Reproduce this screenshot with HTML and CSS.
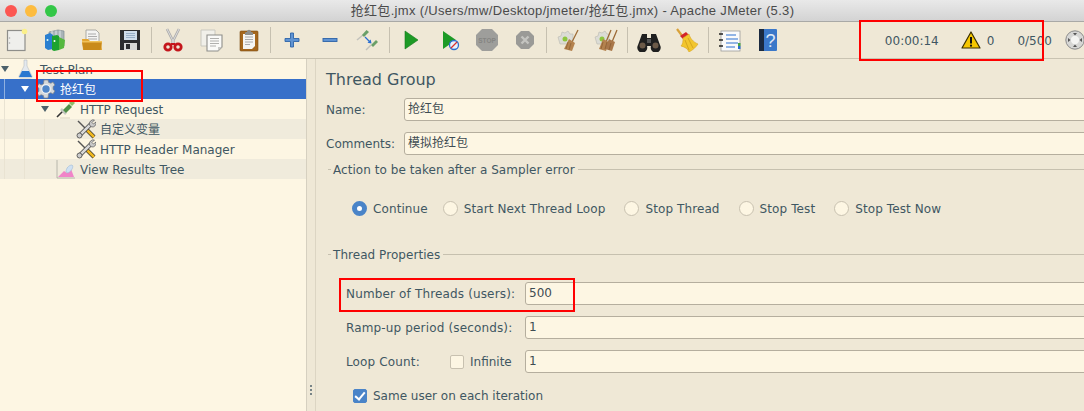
FILE: index.html
```html
<!DOCTYPE html>
<html lang="zh">
<head>
<meta charset="utf-8">
<title>抢红包.jmx - Apache JMeter (5.3)</title>
<link rel="stylesheet" href="styles.css">
</head>
<body>
<div class="window">
  <header class="titlebar">
    <div class="lights"><span class="light red"></span><span class="light amber"></span><span class="light green"></span></div>
    <div class="title">抢红包.jmx (/Users/mw/Desktop/jmeter/抢红包.jmx) - Apache JMeter (5.3)</div>
  </header>

  <div class="toolbar">
    <div class="group">
      <svg class="tool" viewBox="0 0 24 24"><rect x="3.5" y="2.5" width="17.500" height="20" fill="#efefec" stroke="#8e8e8a" stroke-width="1.200"/><circle cx="5.500" cy="10" r=".8" fill="#aaa"/><circle cx="5.500" cy="15" r=".8" fill="#aaa"/><circle cx="20.500" cy="3.500" r="2.800" fill="#fbf08a"/></svg>
      <svg class="tool" viewBox="0 0 24 24"><path d="M7 4l9-2 6 1v15l-14 2z" fill="#a9b4b8" stroke="#7d8a90" stroke-width=".7"/><path d="M10 3v14M14 2.500v14M18 2.500v14" stroke="#dfe5e8"/><path d="M3 7l5-2 3 2v14l-5 1-3-2z" fill="#2a7fd0"/><path d="M10 8l5-1 2 1v14l-5 1-2-1z" fill="#1da32f"/><path d="M17 9l6 3-1 8-5 2z" fill="#55b83e"/><circle cx="12.500" cy="13" r="1" fill="#fff"/><circle cx="5.500" cy="12" r="1" fill="#dff"/></svg>
      <svg class="tool" viewBox="0 0 24 24"><path d="M6 2h10l3 3v10H6z" fill="#f4f4f2" stroke="#9b9b96" stroke-width=".8"/><path d="M8 6h8M8 8.500h9M8 11h9" stroke="#9a9a9a" stroke-width=".8"/><path d="M2 11h6l2 2h11l1 9H3z" fill="#e4a52f"/><path d="M2 14h20l-1.500 8H3.500z" fill="#c98a1a"/><path d="M2 13h20v1.500H2z" fill="#f0c158"/></svg>
      <svg class="tool" viewBox="0 0 24 24"><path d="M2 2h20v20H2z" fill="#2c2c30"/><rect x="6" y="3" width="13" height="9" fill="#cfdcec"/><path d="M8 5.500h9M8 7.500h9M8 9.500h9" stroke="#8aa2bf" stroke-width=".8"/><rect x="6" y="15" width="13" height="7" fill="#d8d8d8"/><rect x="8" y="16" width="4" height="5" fill="#2c2c30"/></svg>
    </div>
    <i class="sep"></i>
    <div class="group">
      <svg class="tool" viewBox="0 0 24 24"><path d="M6 1l7 14M18 1l-7 14" stroke="#a9a9a9" stroke-width="2.600" fill="none"/><path d="M6 1l7 14M18 1l-7 14" stroke="#e4e4e4" stroke-width=".9" fill="none"/><circle cx="7" cy="19" r="3.200" fill="none" stroke="#c4161c" stroke-width="2.800"/><circle cx="17" cy="19" r="3.200" fill="none" stroke="#c4161c" stroke-width="2.800"/><path d="M10 16h4" stroke="#c4161c" stroke-width="2"/></svg>
      <svg class="tool" viewBox="0 0 24 24"><path d="M2 2h14v16H2z" fill="#f1f0ea" stroke="#c9c8c0"/><path d="M8 7h15v12l-4 4H8z" fill="#fafaf8" stroke="#8e8e8a" stroke-width="1.100"/><path d="M11 10.500h9M11 13h9M11 15.500h9M11 18h6" stroke="#a7a7a5" stroke-width=".9"/><path d="M19 23v-4h4z" fill="#c9c9c6"/></svg>
      <svg class="tool" viewBox="0 0 24 24"><rect x="3" y="3" width="18" height="20" rx="1" fill="#a5671d" stroke="#7b4a10" stroke-width=".6"/><path d="M6 6h12v12l-3 3H6z" fill="#f5f5f3"/><path d="M8 9h8M8 11.500h8M8 14h8M8 16.500h5" stroke="#a3a3a3" stroke-width=".9"/><path d="M8 5c0-1 1-1 2-1 0-3 4-3 4 0 1 0 2 0 2 1v2H8z" fill="#8d8d8a"/></svg>
    </div>
    <i class="sep"></i>
    <div class="group">
      <svg class="tool" viewBox="0 0 24 24"><path d="M10.500 5h3v5.500H19v3h-5.500V19h-3v-5.500H5v-3h5.500z" fill="#5f93d3" stroke="#2e64a8" stroke-width=".9"/></svg>
      <svg class="tool" viewBox="0 0 24 24"><rect x="5" y="10.500" width="14" height="3" fill="#5f93d3" stroke="#2e64a8" stroke-width=".9"/></svg>
      <svg class="tool" viewBox="0 0 24 24"><path d="M1 12l6-5" stroke="#c2c2bc" stroke-width="1.500"/><path d="M6 7l4.500-5 2.500 2-5 5z" fill="#6a9f68"/><path d="M9 9l5 5" stroke="#2a6fd0" stroke-width="1.200"/><path d="M15.500 15.500l-4-.8 3.200-3.200z" fill="#2a6fd0"/><path d="M10 22l5-5" stroke="#c2c2bc" stroke-width="1.500"/><path d="M15 17l5-5 2 2-5 5z" fill="#6a9f68"/></svg>
    </div>
    <i class="sep"></i>
    <div class="group">
      <svg class="tool" viewBox="0 0 24 24"><path d="M6 3l13 9-13 9z" fill="#1d9a26" stroke="#157a1c" stroke-width=".6"/></svg>
      <svg class="tool" viewBox="0 0 24 24"><path d="M6 3l13 9-13 9z" fill="#1d9a26"/><circle cx="17" cy="17" r="4.500" fill="#e9f1fb" stroke="#2a6fd0" stroke-width="1.300"/><path d="M14 20l6-6" stroke="#d9322e" stroke-width="1.200"/></svg>
      <svg class="tool" viewBox="0 0 24 24"><path d="M7 1h10l6 6v10l-6 6H7l-6-6V7z" fill="#9e9e9b"/><text class="stop" x="12" y="14.500">STOP</text></svg>
      <svg class="tool" viewBox="0 0 24 24"><path d="M8 3h8l5 5v8l-5 5H8l-5-5V8z" fill="#9a9a97"/><path d="M8.500 8.500l7 7M15.500 8.500l-7 7" stroke="#c4c4c0" stroke-width="2.400"/></svg>
    </div>
    <i class="sep"></i>
    <div class="group">
      <svg class="tool" viewBox="0 0 24 24"><path d="M2 9l3-1 1-4 3 1 3-2 2 3 3 0v10H4z" fill="#dcdcd6" stroke="#b8b8b0" stroke-width=".6"/><circle cx="9" cy="11" r="2.500" fill="#8ec63f"/><path d="M22 2l-6 12" stroke="#9c6a36" stroke-width="1.300"/><path d="M13 11l6 4-3 8-8-2z" fill="#b4824e"/><path d="M12 14l-2 7M15 15l-2 7" stroke="#8a5f33" stroke-width=".7"/></svg>
      <svg class="tool" viewBox="0 0 24 24"><path d="M1 9l3-1 1-4 3 1 3-2 2 3 2 0v10H3z" fill="#dcdcd6" stroke="#b8b8b0" stroke-width=".6"/><circle cx="8" cy="11" r="2.500" fill="#8ec63f"/><path d="M17 2l-5 12M23 2l-5 12" stroke="#9c6a36" stroke-width="1.300"/><path d="M9 11l6 3-3 9-7-2z" fill="#b4824e"/><path d="M15 11l6 3-3 9-7-2z" fill="#a9774a"/><path d="M9 14l-2 7M13 14l-2 7M17 15l-2 7" stroke="#85592f" stroke-width=".7"/></svg>
    </div>
    <i class="sep"></i>
    <div class="group">
      <svg class="tool" viewBox="0 0 24 24"><path d="M5 6h5v4h4V6h5l4 11a5 5 0 1 1-9 1h-4a5 5 0 1 1-9-1z" fill="#1f1f1f"/><circle cx="5.500" cy="17.500" r="3" fill="#6c5a48"/><circle cx="18.500" cy="17.500" r="3" fill="#6c5a48"/><rect x="10" y="11" width="4" height="4" fill="#555"/></svg>
      <svg class="tool" viewBox="0 0 24 24"><path d="M2 1l6 8" stroke="#d9a23a" stroke-width="2.200"/><path d="M5 8l6-4 3 3-6 4z" fill="#d3232a"/><path d="M8 10l6-4c1 4 4 8 9 10-2 3-5 6-9 8-1-3-4-5-8-6 2-2 2-5 2-8z" fill="#f2c62d" stroke="#d9a521" stroke-width=".6"/><path d="M10 12l4 10M13 10l5 10" stroke="#c9961a" stroke-width=".7"/></svg>
    </div>
    <i class="sep"></i>
    <div class="group">
      <svg class="tool" viewBox="0 0 24 24"><rect x="3" y="3" width="19" height="20" fill="#fafafa" stroke="#9c9c9c" stroke-width=".8"/><path d="M1 6h4M1 12h4M1 18h4" stroke="#222" stroke-width="1.400"/><path d="M8 7h10M8 11h12M8 15h12M8 19h9" stroke="#2a6fd0" stroke-width="1.200"/><rect x="20" y="15" width="2.500" height="3" fill="#47a447"/><rect x="20" y="18" width="2.500" height="3" fill="#2a6fd0"/></svg>
      <svg class="tool" viewBox="0 0 24 24"><rect x="3" y="1" width="18" height="22" rx="1" fill="#3b78c9"/><rect x="3" y="1" width="5" height="22" fill="#1b2a3f"/><text class="qmark" x="14.500" y="19">?</text></svg>
    </div>
    <div class="status">
      <span class="timer">00:00:14</span>
      <svg class="warn" viewBox="0 0 20 18"><path d="M10 1l9 16H1z" fill="#f6c700" stroke="#3b3000" stroke-width="1.200" stroke-linejoin="round"/><path d="M10 6v6.500" stroke="#111" stroke-width="2"/><circle cx="10" cy="14.700" r="1.100" fill="#111"/></svg>
      <span class="errs">0</span>
      <span class="threads">0/500</span>
      <svg class="remote" viewBox="0 0 20 20"><circle cx="10" cy="10" r="9.200" fill="#d6d6d4" stroke="#8b8b8b"/><circle cx="10" cy="10" r="4.200" fill="#f4f4f2"/><path d="M8 3h4l-2 2.500zM8 17h4l-2-2.500zM3 8v4l2.500-2zM17 8v4l-2.500-2z" fill="#555"/></svg>
    </div>
  </div>

  <div class="main">
    <nav class="tree">
      <div class="row d0">
        <svg class="arrow" viewBox="0 0 8 6"><path d="M0 0h8L4 6z"/></svg>
        <svg class="node" viewBox="0 0 20 20"><path d="M8 1h3v6l5 10c.5 1.500-.5 2-2 2H5c-1.500 0-2.500-.5-2-2L8 7z" fill="#e4e9ee" stroke="#aab2ba" stroke-width=".5"/><path d="M6 12h7l3 6H3z" fill="#2a78d0"/></svg>
        <span>Test Plan</span>
      </div>
      <div class="row d1 selected guide-a">
        <svg class="arrow" viewBox="0 0 8 6"><path d="M0 0h8L4 6z"/></svg>
        <svg class="node" viewBox="0 0 20 20"><path d="M8 1h4l.6 2.400 2.300.9 2-1.300 2 3-1.800 1.600v2.800l1.800 1.600-2 3-2-1.300-2.300.9L12 19H8l-.6-2.400-2.300-.9-2 1.300-2-3 1.800-1.600V9.200L1.100 7.600l2-3 2 1.300 2.300-.9z" fill="#d5d8da" stroke="#7c8388" stroke-width=".7"/><circle cx="10" cy="10" r="4.300" fill="#4f86c9" stroke="#f0f2f4" stroke-width="1.200"/></svg>
        <span>抢红包</span>
      </div>
      <div class="row d2 guide-b">
        <svg class="arrow" viewBox="0 0 8 6"><path d="M0 0h8L4 6z"/></svg>
        <svg class="node" viewBox="0 0 20 20"><path d="M1 18l6-6" stroke="#333" stroke-width="1.600"/><path d="M5 10l5 5" stroke="#c4c6c0" stroke-width="2.500"/><path d="M7 11l6-6 3 3-6 6z" fill="#4f8f46"/><path d="M13 4l3-3 3 3-3 3z" fill="#8fbd6b"/><path d="M4 19h10" stroke="#d8d2c0"/></svg>
        <span>HTTP Request</span>
      </div>
      <div class="row d3 stripe guide-c">
        <svg class="node" viewBox="0 0 20 20"><path d="M2 2l8 8" stroke="#555" stroke-width="1.500"/><path d="M9 9l9 9" stroke="#333" stroke-width="4"/><path d="M9 9l9 9" stroke="#f0b820" stroke-width="2.600"/><path d="M4 16L15 5" stroke="#444" stroke-width="4"/><path d="M4 16L15 5" stroke="#d8d8d8" stroke-width="2.500"/><path d="M18.500 1a4 4 0 0 0-5 5l2 2a4 4 0 0 0 4.500-5l-2.500 2-1.500-1.500z" fill="#c8c8c8" stroke="#444" stroke-width=".6"/><circle cx="3.500" cy="16.500" r="2.500" fill="#ccc" stroke="#444" stroke-width=".8"/></svg>
        <span>自定义变量</span>
      </div>
      <div class="row d3 guide-c">
        <svg class="node" viewBox="0 0 20 20"><path d="M2 2l8 8" stroke="#555" stroke-width="1.500"/><path d="M9 9l9 9" stroke="#333" stroke-width="4"/><path d="M9 9l9 9" stroke="#f0b820" stroke-width="2.600"/><path d="M4 16L15 5" stroke="#444" stroke-width="4"/><path d="M4 16L15 5" stroke="#d8d8d8" stroke-width="2.500"/><path d="M18.500 1a4 4 0 0 0-5 5l2 2a4 4 0 0 0 4.500-5l-2.500 2-1.500-1.500z" fill="#c8c8c8" stroke="#444" stroke-width=".6"/><circle cx="3.500" cy="16.500" r="2.500" fill="#ccc" stroke="#444" stroke-width=".8"/></svg>
        <span>HTTP Header Manager</span>
      </div>
      <div class="row d2 leaf stripe guide-b">
        <svg class="node" viewBox="0 0 20 20"><path d="M1 1v18h18" fill="none" stroke="#a8a8a0" stroke-width=".8"/><path d="M2 18l6-6 3 2 4-4 3 8z" fill="#f084c8"/><path d="M10 13c0-4 3-7 6-7 2 1 0 6-4 8z" fill="#cfe0f2" stroke="#8fb0d0" stroke-width=".5"/></svg>
        <span>View Results Tree</span>
      </div>
    </nav>

    <div class="divider"><i></i><i></i><i></i></div>

    <section class="content">
      <h1>Thread Group</h1>
      <div class="line"><label class="lab-top">Name:</label><div class="field">抢红包</div></div>
      <div class="line"><label class="lab-top">Comments:</label><div class="field">模拟抢红包</div></div>

      <div class="legend first"><span>Action to be taken after a Sampler error</span></div>
      <div class="radios">
        <span class="radio on r-cont">Continue</span>
        <span class="radio r-gap">Start Next Thread Loop</span>
        <span class="radio r-gap">Stop Thread</span>
        <span class="radio r-gap">Stop Test</span>
        <span class="radio">Stop Test Now</span>
      </div>

      <div class="legend second"><span>Thread Properties</span></div>
      <div class="props">
        <div class="line"><label class="lab-prop">Number of Threads (users):</label><div class="field">500</div></div>
        <div class="line"><label class="lab-prop">Ramp-up period (seconds):</label><div class="field">1</div></div>
        <div class="line">
          <label class="lab-loop">Loop Count:</label>
          <span class="check">Infinite</span>
          <div class="field">1</div>
        </div>
        <div class="same"><span class="check on">Same user on each iteration</span></div>
      </div>
    </section>
  </div>

  <div class="mark mark-tree"></div>
  <div class="mark mark-status"></div>
  <div class="mark mark-threads"></div>
</div>
</body>
</html>
```
FILE: styles.css
```css
*, *::before, *::after { box-sizing: border-box; }
html, body { margin: 0; height: 100%; overflow: hidden; }
body {
  font: 12px/16px "DejaVu Sans", "Noto Sans CJK SC", sans-serif;
  color: #3f5762;
  background: #efe8d6;
}
.window { position: relative; width: 1084px; height: 411px; overflow: hidden; display: flex; flex-direction: column; }

.titlebar {
  height: 22px; flex: none; display: flex; align-items: center; position: relative;
  background: linear-gradient(#e9e9e9, #d3d3d3);
  border-bottom: 1px solid #a9a9a6;
}
.lights { display: flex; gap: 8px; padding-left: 5px; }
.light { width: 12px; height: 12px; border-radius: 50%; }
.red { background: #fc5753; }
.amber { background: #fdbc40; }
.green { background: #33c748; }
.title {
  flex: 1; text-align: center; margin-left: 4px; letter-spacing: .33px;
  font: 13px/21px "Liberation Sans", "Noto Sans CJK SC", sans-serif; color: #4a4a4a;
}

.toolbar {
  height: 37px; flex: none; display: flex; align-items: center; padding-left: 4px;
  background: #efe8d6; border-bottom: 1px solid #c9c3b2;
}
.group { display: flex; gap: 14px; }
.tool { width: 24px; height: 24px; display: block; }
.sep { width: 1px; height: 26px; margin: 0 9px; background: #c6c0b0; }
.stop { font: bold 6.500px "Liberation Sans", sans-serif; fill: #858582; text-anchor: middle; }
.qmark { font: 18px "Liberation Sans", sans-serif; fill: #dfe9f6; text-anchor: middle; }
.status { margin-left: auto; display: flex; align-items: center; font-size: 12px; }
.status span { padding-top: 2px; }
.timer { margin-right: 22px; }
.warn { width: 20px; height: 18px; margin-right: 6px; }
.errs { margin-right: 23px; }
.threads { margin-right: 13px; }
.remote { width: 20px; height: 20px; margin-right: -1px; display: block; }

.main { flex: 1; display: flex; min-height: 0; }
.tree { width: 307px; flex: none; background: #fdf6e3; border-right: 1px solid #d6d0c0; }
.row { height: 20px; display: flex; align-items: center; white-space: nowrap; }
.row span { padding-top: 2px; }
.row.d1 { padding-left: 20px; }
.row.d2 { padding-left: 40px; }
.row.d3 { padding-left: 76px; }
.row.leaf { padding-left: 56px; }
.arrow { width: 8px; height: 6px; margin: 0 7px 0 1px; fill: #4d616b; flex: none; }
.node { width: 20px; height: 20px; margin-right: 4px; flex: none; }
.selected { background-color: #3770c9; color: #fff; }
.selected .arrow { fill: #fff; }
.stripe { background-color: #f0ebdc; }
.guide-a { background-image: linear-gradient(#8fb0e0, #8fb0e0); background-size: 1px 100%; background-position: 4px 0; background-repeat: no-repeat; }
.guide-b { background-image: linear-gradient(#e9e3d2, #e9e3d2), linear-gradient(#e9e3d2, #e9e3d2); background-size: 1px 100%; background-position: 4px 0, 24px 0; background-repeat: no-repeat; }
.guide-c { background-image: linear-gradient(#e9e3d2, #e9e3d2), linear-gradient(#e9e3d2, #e9e3d2), linear-gradient(#e9e3d2, #e9e3d2); background-size: 1px 100%; background-position: 4px 0, 24px 0, 44px 0; background-repeat: no-repeat; }

.divider { width: 9px; flex: none; display: flex; flex-direction: column; justify-content: flex-end; align-items: center; gap: 2px; padding-bottom: 16px; border-right: 1px solid #dcd5c3; }
.divider i { width: 2px; height: 2px; background: #51636c; border-radius: 50%; }

.content { flex: 1; min-width: 0; padding: 0 0 0 10px; overflow: hidden; }
.content h1 { margin: 0; padding-top: 11px; height: 39px; font-weight: 400; font-size: 16px; line-height: 20px; }
.line { display: flex; align-items: center; margin-bottom: 11px; }
.field {
  flex: 1; height: 23px; margin-right: -12px; padding-left: 3px; line-height: 21px;
  background: #fdf6e3; border: 1px solid #b5ae9e; border-radius: 3px; color: #3f4c52;
}
.lab-top { width: 78px; flex: none; }
.lab-prop { width: 179px; flex: none; letter-spacing: .15px; }
.lab-loop { width: 104px; flex: none; letter-spacing: .15px; }
.legend { display: flex; align-items: center; height: 16px; padding-left: 2px; letter-spacing: .05px; }
.legend span { padding-top: 2px; }
.legend::before { content: ""; width: 3px; height: 1px; background: #c6c0af; margin-right: 2px; }
.legend::after { content: ""; flex: 1; height: 1px; background: #c6c0af; margin-left: 3px; }
.legend.first { margin-top: -5px; }
.legend.second { margin-top: 29px; }

.radios { display: flex; margin: 24px 0 0 26px; height: 16px; letter-spacing: .1px; }
.radio { display: flex; align-items: center; white-space: nowrap; }
.radio::before {
  content: ""; width: 15px; height: 15px; margin: 0 6px 2px 0; border-radius: 50%;
  background: #fdf6e3; border: 1px solid #c8c1b0; flex: none;
}
.radio.on::before { background: #fff; border: 5px solid #4a84c8; }
.r-cont { margin-right: 15px; }
.r-gap { margin-right: 19px; }

.props { padding: 20px 0 0 20px; }
.check { display: inline-flex; align-items: center; white-space: nowrap; }
.check::before {
  content: ""; width: 14px; height: 14px; margin-right: 6px; border-radius: 2px;
  background: #fdf6e3; border: 1px solid #c8c1b0; flex: none;
}
.line .check { width: 75px; flex: none; }
.same { margin: 15px 0 0 7px; }
.check.on { position: relative; }
.check.on::before { background: #4a84c8; border-color: #4a84c8; }
.check.on::after {
  content: ""; position: absolute; left: 4px; top: 2px; width: 6px; height: 10px;
  border: solid #fff; border-width: 0 2px 2px 0; transform: rotate(40deg);
}

.mark { position: absolute; border: 2px solid #f00; }
.mark-tree { left: 36px; top: 70px; width: 107px; height: 32px; }
.mark-status { left: 859px; top: 20px; width: 185px; height: 41px; }
.mark-threads { left: 339px; top: 278px; width: 236px; height: 34px; }
```
